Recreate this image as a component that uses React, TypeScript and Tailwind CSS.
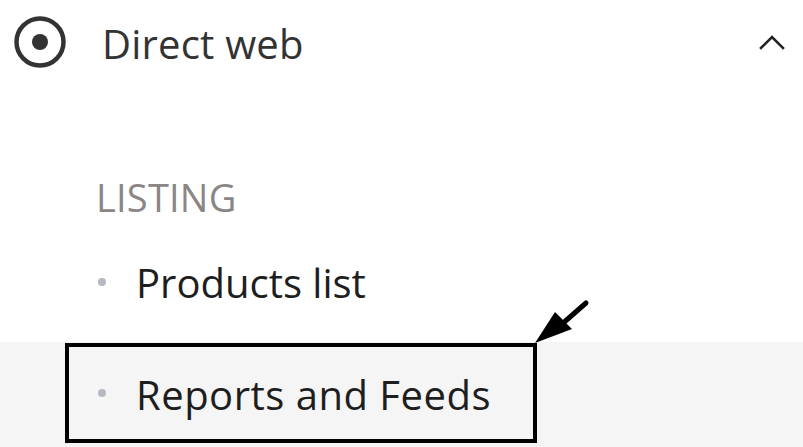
import React from 'react';

const RadioIcon = () => (
  <svg width="52" height="52" viewBox="0 0 52 52" fill="none">
    <circle cx="26" cy="26" r="23.5" stroke="#333333" strokeWidth="4.5" />
    <circle cx="26" cy="26" r="8" fill="#333333" />
  </svg>
);

const ChevronUp = () => (
  <svg width="26" height="16" viewBox="0 0 26 16" fill="none">
    <polyline points="2,14 13,3 24,14" stroke="#222222" strokeWidth="2.6" strokeLinecap="square" />
  </svg>
);

const Bullet = () => <span className="block w-[8px] h-[8px] rounded-full bg-[#b5bac2] shrink-0" />;

const App: React.FC = () => {
  return (
    <div
      className="relative w-[803px] h-[447px] bg-white overflow-hidden"
      style={{ fontFamily: '"Open Sans", Lato, sans-serif' }}
    >
      <div className="flex items-center h-[84px] pl-[14px] pr-[18px]">
        <RadioIcon />
        <span className="ml-[36px] pt-[3px] text-[40px] leading-none tracking-[0.2px] text-[#333333]">Direct web</span>
        <span className="ml-auto">
          <ChevronUp />
        </span>
      </div>

      <div className="pt-[85px]">
        <div className="flex items-center h-[56px] pl-[96px] text-[38px] leading-none tracking-[0.2px] text-[#8a8686]">
          LISTING
        </div>

        <div className="flex items-center h-[56px] mt-[29px] pl-[98px]">
          <Bullet />
          <span className="ml-[30px] pt-[2px] text-[40px] leading-none text-[#1e1e1e]">Products list</span>
        </div>

        <div className="mt-[32px] h-[105px] bg-[#f5f5f5] pt-[1px]">
          <div className="flex items-center ml-[65px] w-[472px] h-[100px] border-[4px] border-black pl-[29px]">
            <Bullet />
            <span className="ml-[30px] pt-[4px] text-[40px] leading-none tracking-[0.5px] text-[#1e1e1e]">
              Reports and Feeds
            </span>
          </div>
        </div>
      </div>

      <svg className="absolute left-[530px] top-[296px]" width="62" height="52" viewBox="0 0 62 52">
        <line x1="56" y1="7" x2="32" y2="28" stroke="#000" strokeWidth="5" strokeLinecap="round" />
        <polygon points="5,47 25,16 42,33" fill="#000" />
      </svg>
    </div>
  );
};

export default App;
